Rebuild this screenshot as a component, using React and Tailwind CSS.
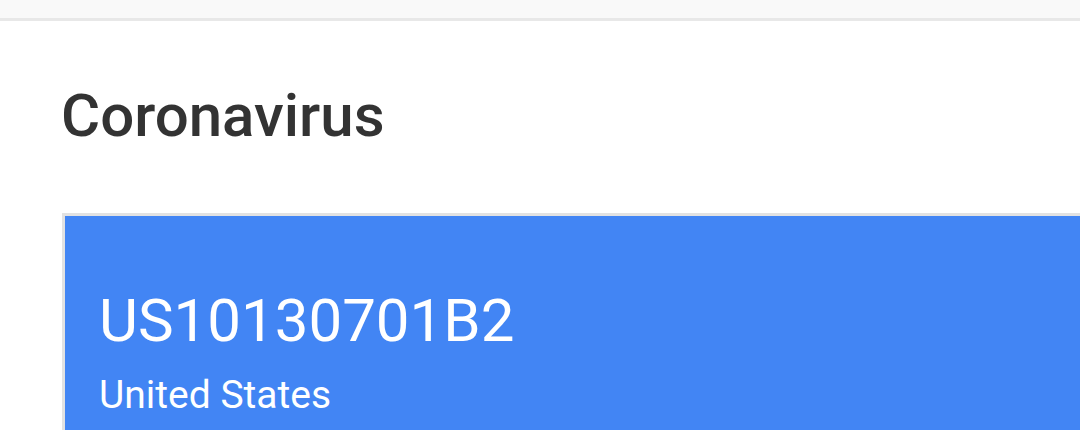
import React from 'react'

export default function App(){
  return (
    <div className="w-[1080px] h-[430px] overflow-hidden bg-white" style={{fontFamily:'Roboto, "Liberation Sans", sans-serif'}}>
      <div className="h-[18px] bg-[#f9f9f9] border-b-[3px] border-[#e8e8e8] box-content" />
      <div className="pl-[61px] pt-[65px]">
        <h1 className="text-[60px] leading-none font-medium text-[#333333]">Coronavirus</h1>
        <div className="mt-[67px] ml-[1px] border-l-[3px] border-t-[3px] border-[#e2e2e2] bg-[#4285f4] pl-[34px] pt-[75px] pb-[40px] text-white">
          <div className="text-[60px] leading-none font-normal">US10130701B2</div>
          <div className="mt-[25px] text-[39px] leading-none">United States</div>
        </div>
      </div>
    </div>
  )
}
